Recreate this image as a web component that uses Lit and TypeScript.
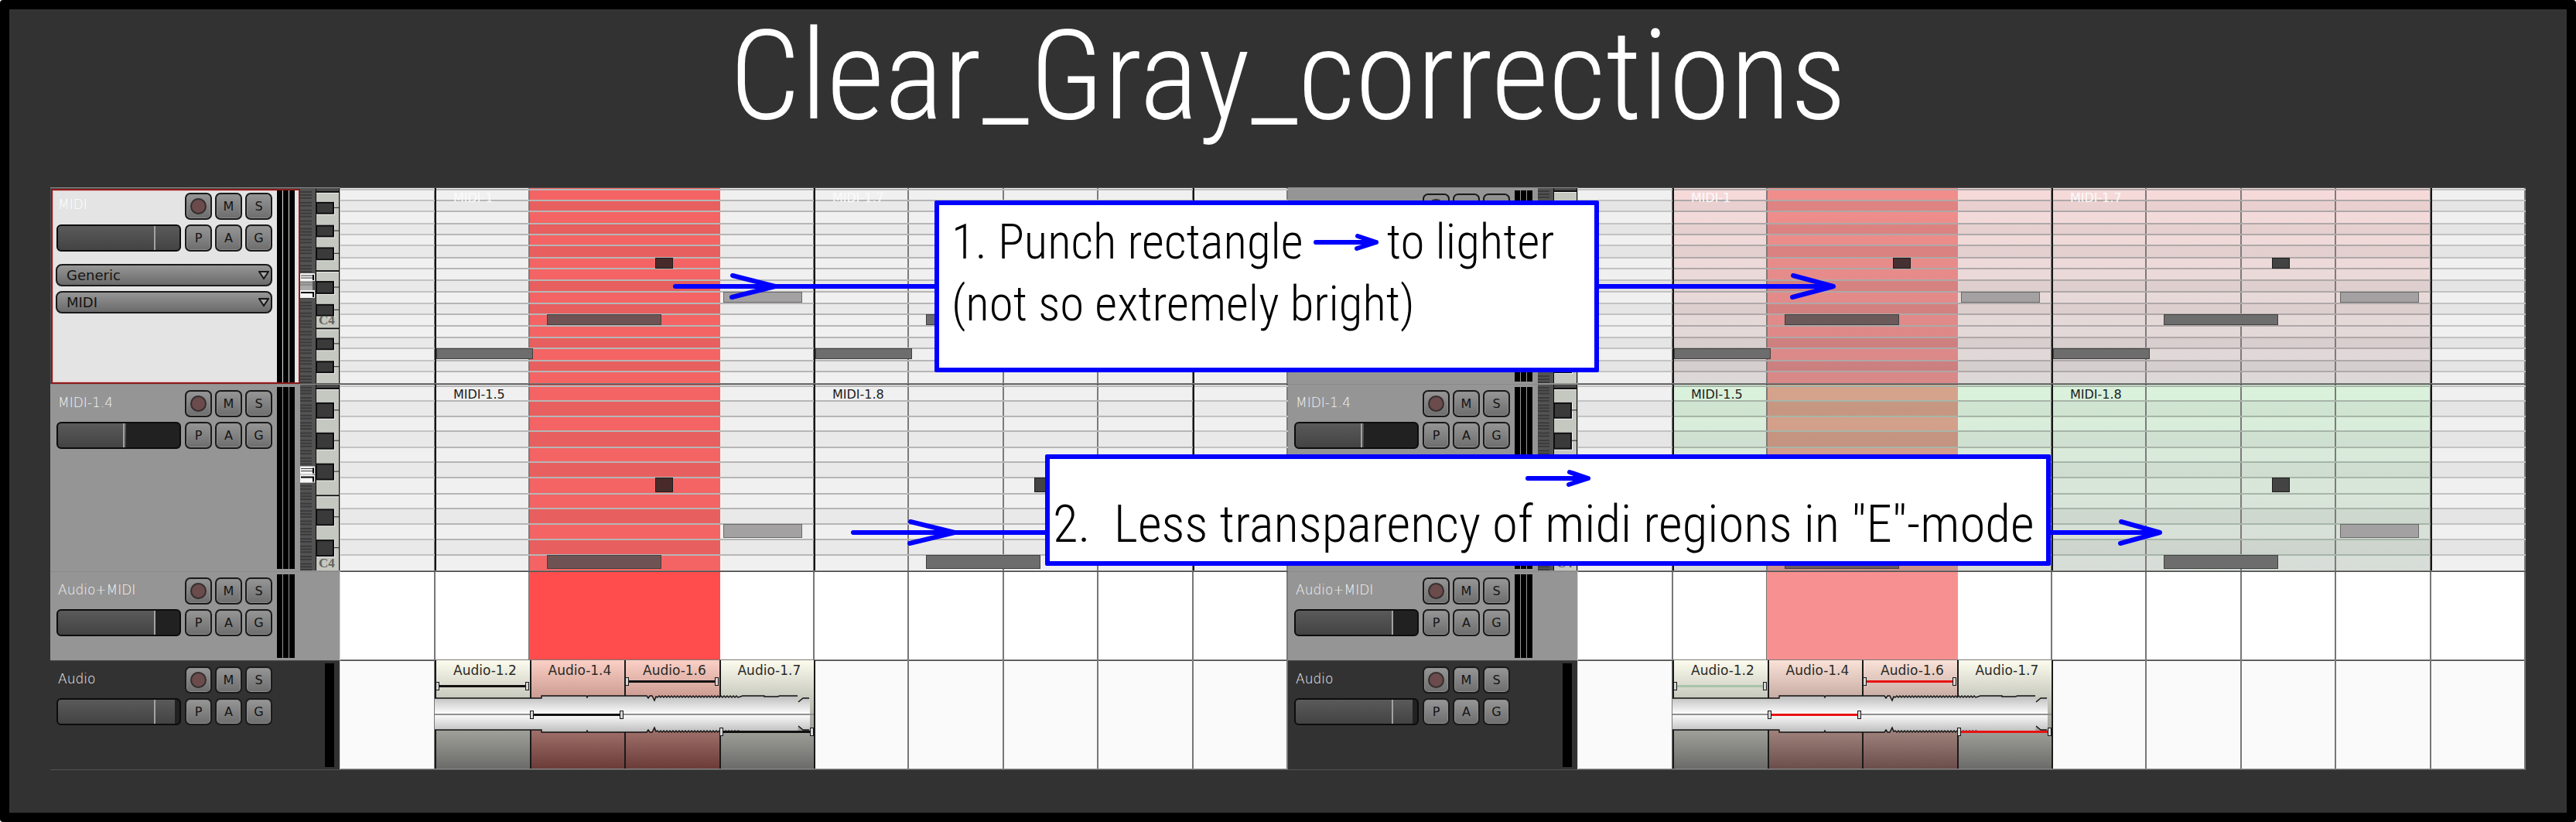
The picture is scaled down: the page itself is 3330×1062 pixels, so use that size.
import { LitElement, html, svg, css, nothing } from "lit";
import { customElement, property } from "lit/decorators.js";

type Tint = "red" | "green" | "none";

interface Note { x: number; y: number; w: number; h: number; kind: "dark" | "mid" | "soft" }
interface Track {
  id: string;
  name: string;
  height: number;
  level: number;
  fill: number;
  kind: "midi" | "bus" | "audio";
}

/** Horizontal layout of one arrange canvas, in pixels from its left edge. */
const CANVAS = 1225;
const BEATS = [122, 244, 367, 489, 612, 734, 857, 979, 1102, 1224];
const REGION_STARTS = [122, 612];
const REGION_W = 490;
const PUNCH = { x: 244, w: 247 };

const TRACKS: Track[] = [
  { id: "midi", name: "MIDI", height: 254, level: 80, fill: 100, kind: "midi" },
  { id: "midi14", name: "MIDI-1.4", height: 242, level: 54, fill: 56, kind: "midi" },
  { id: "bus", name: "Audio+MIDI", height: 115, level: 80, fill: 80, kind: "bus" },
  { id: "audio", name: "Audio", height: 141, level: 80, fill: 96, kind: "audio" },
];

const LANES: Record<string, { lines: number[]; dark: boolean[] }> = {
  midi: {
    lines: [2, 16, 30, 46, 60, 74, 90, 104, 119, 134, 149, 163, 178, 193, 207, 223, 237],
    dark: [false, true, false, true, false, true, false, false, true, false, true, false, false, true, false, true, false],
  },
  midi14: {
    lines: [2, 21, 41, 60, 81, 100, 120, 141, 160, 180, 200, 220],
    dark: [false, true, false, true, false, true, false, false, true, false, true, false],
  },
};

const NOTES: Record<string, Note[]> = {
  midi: [
    { x: 2, y: 208, w: 125, h: 14, kind: "mid" },
    { x: 145, y: 164, w: 148, h: 14, kind: "mid" },
    { x: 285, y: 91, w: 23, h: 14, kind: "dark" },
    { x: 373, y: 135, w: 102, h: 14, kind: "soft" },
  ],
  midi14: [
    { x: 145, y: 221, w: 148, h: 18, kind: "mid" },
    { x: 285, y: 121, w: 23, h: 19, kind: "dark" },
    { x: 373, y: 181, w: 102, h: 18, kind: "soft" },
  ],
};

const LABELS: Record<string, string[]> = {
  midi: ["MIDI-1", "MIDI-1.7"],
  midi14: ["MIDI-1.5", "MIDI-1.8"],
  audio: ["Audio-1.2", "Audio-1.4", "Audio-1.6", "Audio-1.7"],
};

const KEYS: Record<string, { black: number[][]; gaps: number[]; octave: number }> = {
  midi: {
    black: [[18, 16], [48, 16], [77, 17], [121, 17], [151, 16], [195, 16], [225, 16]],
    gaps: [4, 107, 182],
    octave: 177,
  },
  midi14: {
    black: [[24, 21], [63, 22], [103, 22], [162, 22], [202, 22]],
    gaps: [5, 144],
    octave: 238,
  },
};

@customElement("track-head")
class TrackHead extends LitElement {
  static styles = css`
    :host { display: block; }
    .head {
      display: grid;
      grid-template-columns: 293px 30px 1fr;
      height: 100%;
      box-sizing: border-box;
      background: #959595;
      border-top: 1px solid #8a8a8a;
      font-family: "DejaVu Sans", sans-serif;
      overflow: hidden;
    }
    .head.midi { grid-template-columns: 293px 30px 20px 1fr; }
    .head.audio { background: #323232; border-top-color: #4a4a4a; }
    .main { display: grid; grid-template-columns: 161px 113px; column-gap: 5px; align-content: start; padding: 7px 0 0 8px; row-gap: 6px; }
    .name { padding-left: 2px; font-size: 17px; line-height: 32px; color: #f4f4f4; }
    .row { display: flex; gap: 4px; }
    .btn {
      width: 35px; height: 35px; padding: 0; box-sizing: border-box;
      border: 2px solid #1a1a1a; border-radius: 7px;
      background: linear-gradient(#969696, #6d6d6d);
      box-shadow: inset 0 0 0 1px #8d8d8d;
      color: #141414; font-family: inherit; font-size: 16px; line-height: 30px; text-align: center;
      display: grid; place-items: center;
    }
    .dot { width: 17px; height: 17px; border: 2px solid #352e2e; border-radius: 50%; background: #6b4b4c; }
    .fader {
      appearance: none; -webkit-appearance: none; margin: 0; width: 161px; height: 35px; box-sizing: border-box;
      border: 2px solid #0c0c0c; border-radius: 6px;
      background: linear-gradient(90deg, transparent var(--fill), #212121 var(--fill)), linear-gradient(#5a5a5a, #434343);
    }
    .fader::-webkit-slider-thumb { -webkit-appearance: none; width: 2px; height: 31px; background: #a2a2a2; }
    .selects { grid-column: 1 / -1; display: grid; gap: 6px; padding-top: 10px; margin-left: -1px; }
    .pick { display: grid; width: 280px; }
    .pick > * { grid-area: 1 / 1; }
    select {
      appearance: none; -webkit-appearance: none; margin: 0; height: 29px; padding: 0 12px; box-sizing: border-box;
      border: 2px solid #1a1a1a; border-radius: 8px;
      background: linear-gradient(#969696, #6a6a6a);
      color: #141414; font-family: inherit; font-size: 18px; line-height: 24px;
    }
    .tri { width: 14px; height: 12px; justify-self: end; align-self: center; margin-right: 4px; pointer-events: none; }
    .meters { display: flex; gap: 1px; padding: 3px 0; }
    .meters i { width: 7px; background: #000; }
    .single { grid-column: 3; justify-self: end; width: 12px; margin: 3px 7px 3px 0; background: #000; }
    .edge { border-right: 1px solid #d9d9d9; }
    .scroom, .keys { display: block; width: 100%; height: 100%; margin-top: -1px; }
    .cell { min-width: 0; overflow: hidden; }
    .octave { font-family: "Liberation Serif", serif; font-weight: bold; font-size: 17px; fill: #63635f; }

    .head.selected { background: #535353; padding: 1px 0 0 1px; grid-template-columns: 292px 30px 20px 1fr; }
    .selected .main { background: #e4e4e4; padding: 3px 0 0 5px; border: 2px solid #8c1b1c; border-right: 0; box-shadow: inset 1px 1px #e8b9b9, inset 0 -1px #e8b9b9; }
    .selected .name { color: #fff; line-height: 30px; }
    .selected .meters { background: #e4e4e4; padding: 0; border: 2px solid #8c1b1c; border-left: 0; }
  `;
  @property({ attribute: false }) track!: Track;
  @property({ type: Boolean }) selected = false;

  private scroomer() {
    const { height, id } = this.track;
    const accidentals = [1, 3, 6, 8, 10];
    const step = height / 127;
    const bars = Array.from({ length: 127 }, (_, n) => n).filter((n) => accidentals.includes((n + 4) % 12));
    const [a, b] = id === "midi" ? [111, 133] : [107, 118];
    return html`<svg class="scroom" viewBox="0 0 20 ${height}" preserveAspectRatio="none" aria-hidden="true">
      <rect width="20" height=${height} fill="#535353" />
      ${bars.map((n) => svg`<rect x="0" y=${n * step} width="15" height="2" fill="#3b3b3b" />`)}
      <rect x="0" y=${a} width="16" height=${b - a + 10} fill="#a9a9a9" />
      <path d="M0 ${a + 12}h16M0 ${a + 15}h16" stroke="#6f6f6f" stroke-width="1" />
      <rect x="0" y=${a} width="19" height="10" fill="#f6f6f6" />
      <path d="M1 ${a + 3}h15M1 ${a + 6}h15" stroke="#333" stroke-width="1" />
      <path d="M17 ${a + 2}v7" stroke="#000" stroke-width="2" />
      <rect x="0" y=${b} width="19" height="10" fill="#f6f6f6" />
      <path d="M1 ${b + 3}h16v6" stroke="#000" stroke-width="2" fill="none" />
    </svg>`;
  }

  private keyboard() {
    const { height, id } = this.track;
    const k = KEYS[id];
    return html`<svg class="keys" viewBox="0 0 32 ${height}" preserveAspectRatio="none" aria-hidden="true">
      <rect width="32" height=${height} fill="#c5c8c0" />
      <rect width="32" height=${k.gaps[0]} fill="#4a4a4a" />
      ${k.gaps.map((y) => svg`<rect y=${y} width="30" height="2" fill="#0c0c0c" /><rect y=${y + 2} width="30" height="1" fill="#eee" />`)}
      ${k.black.map(([y, h]) => svg`
        <rect x="0" y=${y} width="25" height=${h + 1} fill="#f2f2f2" />
        <rect x="0" y=${y} width="24" height=${h} fill="#0e0e0e" />
        <rect x="2" y=${y + 2} width="20" height=${h - 4} fill="#3a3a3a" />
        <rect x="24" y=${y + h / 2 - 1} width="6" height="1" fill="#222" />`)}
      <rect width="1" height=${height} fill="#0c0c0c" />
      <text class="octave" x="4" y=${k.octave}>C4</text>
      <rect x="30" width="1" height=${height} fill="#0c0c0c" />
      <rect x="31" width="1" height=${height} fill="#bdbdbd" />
    </svg>`;
  }

  render() {
    const t = this.track;
    const midi = t.kind === "midi";
    return html`<div class="head ${t.kind} ${this.selected ? "selected" : ""} ${midi ? "" : "edge"}">
      <div class="main">
        <label class="name" for="fader">${t.name}</label>
        <div class="row">
          <button class="btn" aria-label="Record"><span class="dot"></span></button>
          <button class="btn">M</button>
          <button class="btn">S</button>
        </div>
        <input id="fader" class="fader" type="range" min="0" max="100" .value=${String(t.level)} style="--fill:${t.fill}%" />
        <div class="row">
          <button class="btn">P</button>
          <button class="btn">A</button>
          <button class="btn">G</button>
        </div>
        ${this.selected
          ? html`<div class="selects">
              ${["Generic", "MIDI"].map((o) => html`<div class="pick">
                <select aria-label="${o} mode"><option>${o}</option></select>
                <svg class="tri" viewBox="0 0 14 12" aria-hidden="true"><path d="M1 1h12l-6 9z" fill="#a8a8a8" stroke="#161616" stroke-width="2" /></svg>
              </div>`)}
            </div>`
          : nothing}
      </div>
      ${t.kind === "audio" ? html`<div></div><div class="single"></div>` : html`<div class="meters"><i></i><i></i><i></i></div>`}
      ${midi ? html`<div class="cell">${this.scroomer()}</div><div class="cell">${this.keyboard()}</div>` : nothing}
    </div>`;
  }
}

@customElement("track-lane")
class TrackLane extends LitElement {
  static styles = css`
    :host { display: block; }
    .lane { position: relative; height: 100%; overflow: hidden; background: #fff; }
    .draw { display: block; width: 100%; height: 100%; }
    .label { position: absolute; top: 4px; font: 16px/19px "DejaVu Sans", sans-serif; color: #1c1c1c; }
    .label.pale { color: #fbfafa; }
    .label.clip { font-size: 17px; color: #2a2a26; }
  `;
  @property({ attribute: false }) track!: Track;
  @property({ type: Boolean }) revised = false;

  private get tint(): Tint {
    if (!this.revised) return "none";
    return this.track.id === "midi" ? "red" : "green";
  }

  private separator(h: number) {
    return svg`<rect y=${h - 1} width=${CANVAS} height="1" fill="#7a7a7a" /><rect width=${CANVAS} height="1" fill="#4d4d4d" />`;
  }

  private midi() {
    const { id, height: h } = this.track;
    const { lines, dark } = LANES[id];
    const tint = this.tint;
    const region = { red: ["#f7dada", "#dcd8d7"], green: ["#daf2dc", "#d7dcd7"], none: ["#f0f0f0", "#f0f0f0"] }[tint];
    const punch = { red: ["#f18e8b", "#d88888"], green: ["#d5a48b", "#cc9088"], none: ["#f46464", "#f46464"] }[tint];
    const line = { red: "#a89f9f", green: "#9db09f", none: "#b2b2b2" }[tint];
    const fills = { dark: "#444343", mid: "#6d6d6d", soft: "#a3a1a2" };
    const hot = this.revised ? { dark: "#463132", mid: "#6c5a5b", soft: "#a3a1a2" } : { dark: "#482a2b", mid: "#6f5354", soft: "#a3a1a2" };
    return svg`
      <defs>
        <linearGradient id="region" x2="0" y2="1"><stop stop-color=${region[0]} /><stop offset="1" stop-color=${region[1]} /></linearGradient>
        <linearGradient id="punch" x2="0" y2="1"><stop stop-color=${punch[0]} /><stop offset="1" stop-color=${punch[1]} /></linearGradient>
      </defs>
      <rect width=${CANVAS} height=${h} fill="#f0f0f0" />
      <rect x="122" width="980" height=${h} fill="url(#region)" />
      <rect x=${PUNCH.x} width=${PUNCH.w} height=${h} fill="url(#punch)" />
      ${lines.map((y, i) => (dark[i] ? svg`<rect y=${y} width=${CANVAS} height=${(lines[i + 1] ?? h) - y} fill="#000" opacity=${tint === "none" ? 0.028 : 0.045} />
        <rect x=${PUNCH.x} y=${y} width=${PUNCH.w} height=${(lines[i + 1] ?? h) - y} fill="#000" opacity=".018" />` : nothing))}
      ${BEATS.filter((x) => x < PUNCH.x + 10 || x > PUNCH.x + PUNCH.w).map((x) => svg`<rect x=${x - 1} width="2" height=${h} fill="#7e7a7a" />`)}
      ${lines.map((y) => svg`<rect y=${y} width=${CANVAS} height="2" fill="#c3c3c3" />
        <rect x="122" y=${y} width="980" height="2" fill=${line} opacity=".75" />`)}
      ${[...REGION_STARTS, 1102].map((x) => svg`<rect x=${x} width="2" height=${h} fill="#161616" />`)}
      ${REGION_STARTS.map((x, r) => NOTES[id].map((n) => {
        const inPunch = r === 0 && n.x > 122;
        return svg`<rect x=${x + n.x + 0.5} y=${n.y + 0.5} width=${n.w - 1} height=${n.h - 1} fill=${(inPunch ? hot : fills)[n.kind]}
          stroke=${n.kind === "soft" ? "#6b6a6a" : n.kind === "mid" ? "#424040" : "#1e1c1c"} />`;
      }))}
      ${this.separator(h)}`;
  }

  private bus() {
    const h = this.track.height;
    return svg`
      <rect width=${CANVAS} height=${h} fill="#fff" />
      ${BEATS.map((x) => svg`<rect x=${x - 1} width="2" height=${h} fill="#777" />`)}
      <rect x=${PUNCH.x} width=${PUNCH.w} height=${h} fill=${this.revised ? "#f79090" : "#ff4d4d"} />
      ${this.separator(h)}`;
  }

  private wave() {
    let d = "M122 49H260V46H318l1 2l1-2H396l2 3l2-3h3l3 6l2-5";
    for (let x = 410, i = 0; x < 515; x += 2, i++) d += `L${x} ${i % 2 ? 46 : 48}`;
    return d + "L520 46H548V47H565L568 46H591";
  }

  private audio() {
    const h = this.track.height;
    const xs = [122, 245, 367, 490, 612];
    const outline = this.wave();
    const tail = "M592 54L598 49H606";
    const gains = [
      { x: 125, y: 33, w: 117 }, { x: 247, y: 70, w: 117 }, { x: 370, y: 27, w: 117 }, { x: 492, y: 92, w: 118 },
    ];
    const colours = this.revised ? ["#a9c4ab", "#e81212", "#e81212", "#e81212"] : ["#111", "#111", "#111", "#111"];
    const hot = this.revised ? ["#fae2d8", "#c5a9a0", "#a0837c", "#6a4c4a"] : ["#fbd0c6", "#c9988e", "#a0706a", "#6a3a38"];
    const calm = ["#fcfcee", "#c6c7bc", "#a0a19a", "#6a6a68"];
    const stops = (c: string[]) => c.map((v, i) => svg`<stop offset=${[0, 0.36, 0.64, 1][i]} stop-color=${v} />`);
    return svg`
      <defs>
        <linearGradient id="calm" x2="0" y2="1">${stops(calm)}</linearGradient>
        <linearGradient id="hot" x2="0" y2="1">${stops(hot)}</linearGradient>
        <linearGradient id="body" gradientUnits="userSpaceOnUse" x1="0" x2="0" y1="46" y2="70"><stop stop-color="#bcbcbc" /><stop offset="1" stop-color="#fff" /></linearGradient>
      </defs>
      <rect width=${CANVAS} height=${h} fill="#fafafa" />
      <rect width=${CANVAS} height="1" fill="#4d4d4d" />
      ${BEATS.map((x) => svg`<rect x=${x - 1} width="2" height=${h} fill="#777" />`)}
      ${[0, 1, 2, 3].map((i) => svg`<rect x=${xs[i]} width=${xs[i + 1] - xs[i]} height=${h} fill="url(#${i === 1 || i === 2 ? "hot" : "calm"})" />`)}
      ${xs.map((x) => svg`<rect x=${x} width="2" height=${h} fill="#1a1a1a" />`)}
      ${["", "translate(0 139) scale(1 -1)"].map((t) => svg`<g transform=${t}>
        <path d="${outline}L592 54L598 49H607V70H122Z" fill="url(#body)" />
        <path d=${outline} fill="none" stroke="#111" stroke-width="1.4" />
        <path d=${tail} fill="none" stroke="#111" stroke-width="1.4" />
      </g>`)}
      <rect x="122" y="69" width="490" height="2" fill="#8f8f8f" />
      ${gains.map((g, i) => svg`
        <rect x=${g.x} y=${g.y - 1} width=${g.w} height="3" fill=${colours[i]} />
        ${[g.x - 2, g.x + g.w - 3].map((x) => svg`<rect x=${x + 0.5} y=${g.y - 4.5} width="4" height="10" fill="#d6d6d6" stroke="#161616" />`)}`)}
      <rect y=${h - 1} width=${CANVAS} height="1" fill="#8a8a8a" />`;
  }

  render() {
    const t = this.track;
    const step = t.kind === "audio" ? REGION_W / 4 : REGION_W;
    const labels = LABELS[t.id] ?? [];
    const tone = t.kind === "audio" ? "clip" : t.id === "midi" ? "pale" : "";
    const drawing = t.kind === "midi" ? this.midi() : t.kind === "bus" ? this.bus() : this.audio();
    return html`<div class="lane">
      <svg class="draw" viewBox="0 0 ${CANVAS} ${t.height}" preserveAspectRatio="none" aria-hidden="true">${drawing}</svg>
      ${labels.map((l, i) => html`<span class="label ${tone}" style="left:${((146 + i * step) / CANVAS) * 100}%">${l}</span>`)}
    </div>`;
  }
}

@customElement("arrange-panel")
class ArrangePanel extends LitElement {
  static styles = css`
    :host { display: block; }
    .panel { display: grid; grid-template-columns: 375px 1fr; grid-template-rows: 254px 242px 115px 141px; border-bottom: 1px solid #555; }
  `;
  @property({ type: Boolean }) revised = false;
  render() {
    return html`<section class="panel">
      ${TRACKS.map((t, i) => html`
        <track-head .track=${t} ?selected=${i === 0 && !this.revised}></track-head>
        <track-lane .track=${t} ?revised=${this.revised}></track-lane>`)}
    </section>`;
  }
}

@customElement("app-root")
class AppRoot extends LitElement {
  static styles = css`
    :host { display: block; background: #fff; }
    .page {
      position: relative; box-sizing: border-box; min-height: 100vh; overflow: hidden;
      border: 12px solid #000; border-radius: 4px; background: #323232;
      font-family: "Roboto Condensed", "Roboto", sans-serif; font-weight: 300;
    }
    .title { margin: 0; height: 230px; font-size: 162px; line-height: 172px; font-weight: 300; text-align: center; color: #fff; }
    .panels { display: grid; grid-template-columns: 1fr 1fr; padding: 0 53px; }
    .links { position: absolute; left: -12px; top: -12px; width: 3330px; height: 1062px; pointer-events: none; }
    .stroke { fill: none; stroke: #00f; stroke-width: 6px; stroke-linecap: round; stroke-linejoin: round; }
    .note { position: absolute; box-sizing: border-box; background: #fff; border: 6px solid #00f; border-radius: 2px; color: #000; line-height: 80px; }
    .note p { margin: 0; display: flex; align-items: center; white-space: pre; }
    .first { left: 1196px; top: 247px; width: 859px; height: 222px; padding: 8px 16px; font-size: 63px; }
    .second { left: 1339px; top: 575px; width: 1300px; height: 144px; padding: 12px 4px; font-size: 67px; }
    .note .over { padding-left: 610px; height: 32px; align-items: flex-start; }
    .arrow { width: 88px; height: 26px; flex: none; }
    .gap { margin: 0 8px 0 12px; }
  `;

  private arrow(extra = "") {
    return html`<svg class="arrow ${extra}" viewBox="0 0 88 26" aria-hidden="true"><path class="stroke" d="M4 13H82M58 5L82 13L57 21" /></svg>`;
  }

  render() {
    return html`<main class="page">
      <h1 class="title">Clear_Gray_corrections</h1>
      <div class="panels">
        <arrange-panel></arrange-panel>
        <arrange-panel revised></arrange-panel>
      </div>
      <svg class="links" viewBox="0 0 3330 1062" aria-hidden="true">
        <path class="stroke" d="M873 370H2370M947 356L1002 370L946 384M2318 356L2370 370L2317 384" />
        <path class="stroke" d="M1103 688H2792M1177 674L1234 688L1176 702M2742 674L2792 688L2741 702" />
      </svg>
      <div class="note first">
        <p>1. Punch rectangle${this.arrow("gap")}to lighter</p>
        <p>(not so extremely bright)</p>
      </div>
      <div class="note second">
        <p class="over">${this.arrow()}</p>
        <p>2.  Less transparency of midi regions in "E"-mode</p>
      </div>
    </main>`;
  }
}
